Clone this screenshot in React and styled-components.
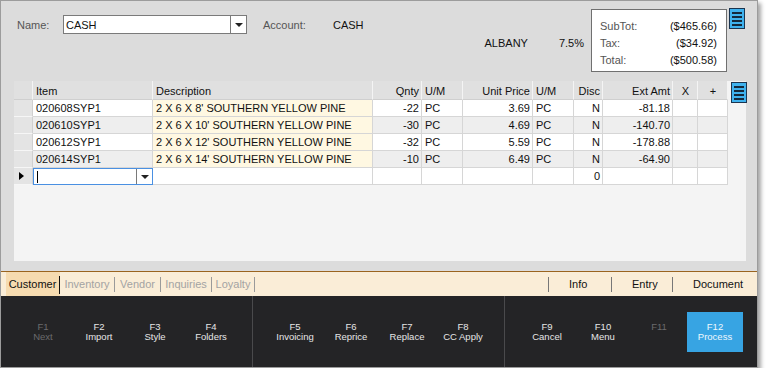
import React from 'react';
import styled, { createGlobalStyle } from 'styled-components';

const GlobalStyle = createGlobalStyle`
  body {
    margin: 0;
    background: #ffffff;
    font-family: 'Liberation Sans', Arial, sans-serif;
  }
  * {
    box-sizing: border-box;
  }
`;

const columns = [
  { key: 'sel', w: 19 },
  { key: 'item', w: 120, label: 'Item', align: 'left' },
  { key: 'desc', w: 220, label: 'Description', align: 'left' },
  { key: 'qty', w: 49, label: 'Qnty', align: 'right' },
  { key: 'um', w: 41, label: 'U/M', align: 'left' },
  { key: 'price', w: 70, label: 'Unit Price', align: 'right' },
  { key: 'um2', w: 41, label: 'U/M', align: 'left' },
  { key: 'disc', w: 29, label: 'Disc', align: 'right' },
  { key: 'ext', w: 70, label: 'Ext Amt', align: 'right' },
  { key: 'x', w: 25, label: 'X', align: 'center' },
  { key: 'plus', w: 30, label: '+', align: 'center' },
];

const template = columns.map((c) => `${c.w}px`).join(' ');

const lines = [
  { item: '020608SYP1', desc: "2 X 6 X 8' SOUTHERN YELLOW PINE", qty: '-22', um: 'PC', price: '3.69', um2: 'PC', disc: 'N', ext: '-81.18' },
  { item: '020610SYP1', desc: "2 X 6 X 10' SOUTHERN YELLOW PINE", qty: '-30', um: 'PC', price: '4.69', um2: 'PC', disc: 'N', ext: '-140.70' },
  { item: '020612SYP1', desc: "2 X 6 X 12' SOUTHERN YELLOW PINE", qty: '-32', um: 'PC', price: '5.59', um2: 'PC', disc: 'N', ext: '-178.88' },
  { item: '020614SYP1', desc: "2 X 6 X 14' SOUTHERN YELLOW PINE", qty: '-10', um: 'PC', price: '6.49', um2: 'PC', disc: 'N', ext: '-64.90' },
];

const tabsLeft = [
  { name: 'Customer', w: 54 },
  { name: 'Inventory', w: 55 },
  { name: 'Vendor', w: 46 },
  { name: 'Inquiries', w: 51 },
  { name: 'Loyalty', w: 43 },
];

const tabsRight = [
  { name: 'Info', w: 63 },
  { name: 'Entry', w: 61 },
  { name: 'Document', w: 85 },
];

const keyGroups = [
  [
    { k: 'F1', label: 'Next', off: true },
    { k: 'F2', label: 'Import' },
    { k: 'F3', label: 'Style' },
    { k: 'F4', label: 'Folders' },
  ],
  [
    { k: 'F5', label: 'Invoicing' },
    { k: 'F6', label: 'Reprice' },
    { k: 'F7', label: 'Replace' },
    { k: 'F8', label: 'CC Apply' },
  ],
  [
    { k: 'F9', label: 'Cancel' },
    { k: 'F10', label: 'Menu' },
    { k: 'F11', label: '', off: true },
    { k: 'F12', label: 'Process', primary: true },
  ],
];

const Window = styled.div`
  width: 758px;
  height: 368px;
  border: 1px solid #9c9c9c;
  background: #dcdcdc;
  box-shadow: 3px 3px 4px rgba(0, 0, 0, 0.35);
  display: flex;
  flex-direction: column;
  font-size: 11px;
  color: #111;
`;

const Header = styled.div`
  height: 80px;
  display: flex;
  align-items: flex-start;
  padding-right: 12px;
`;

const Fields = styled.div`
  flex: 1;
  display: flex;
  flex-direction: column;
`;

const NameRow = styled.div`
  display: flex;
  align-items: center;
  height: 19px;
  margin-top: 14px;
  padding-left: 16px;
`;

const Label = styled.span`
  color: #555;
  width: ${(p) => p.$w}px;
`;

const Value = styled.span`
  color: #111;
`;

const Combo = styled.div`
  display: flex;
  width: ${(p) => p.$w}px;
  height: ${(p) => p.$h}px;
  background: #fff;
  border: 1px solid ${(p) => p.$border};
  margin-right: ${(p) => p.$mr || 0}px;
`;

const ComboText = styled.div`
  flex: 1;
  display: flex;
  align-items: center;
  padding-left: 2px;
`;

const Caret = styled.span`
  width: 1px;
  height: 12px;
  background: #000;
  margin-left: 1px;
`;

const ComboButton = styled.div`
  width: 16px;
  border-left: 1px solid #7a7a7a;
  display: flex;
  align-items: center;
  justify-content: center;

  &::after {
    content: '';
    border-left: 4px solid transparent;
    border-right: 4px solid transparent;
    border-top: 4px solid #222;
  }
`;

const LocationRow = styled.div`
  display: flex;
  justify-content: flex-end;
  gap: 31px;
  padding-right: 7px;
  margin-top: 2px;
  height: 14px;
  align-items: center;
`;

const Totals = styled.div`
  width: 136px;
  height: 63px;
  margin-top: 8px;
  background: #fff;
  border: 1px solid #707070;
  padding: 7px 9px 0 8px;
  display: flex;
  flex-direction: column;
`;

const TotalRow = styled.div`
  display: flex;
  justify-content: space-between;
  height: 17px;
  align-items: center;

  span:first-child {
    color: #555;
  }
`;

const MenuIconBox = styled.div`
  margin: ${(p) => p.$mt}px 0 0 ${(p) => p.$ml}px;
  width: 16px;
  height: 21px;
  flex-shrink: 0;
`;

const MenuIcon = ({ mt, ml }) => (
  <MenuIconBox $mt={mt} $ml={ml}>
    <svg width="16" height="21" viewBox="0 0 16 21">
      <rect x="0.5" y="0.5" width="15" height="20" fill="#3fb2ee" stroke="#1b3550" />
      <rect x="3" y="4" width="10" height="2" fill="#15293c" />
      <rect x="3" y="8" width="10" height="2" fill="#15293c" />
      <rect x="3" y="12" width="10" height="2" fill="#15293c" />
      <rect x="3" y="16" width="10" height="2" fill="#15293c" />
    </svg>
  </MenuIconBox>
);

const GridArea = styled.div`
  height: 180px;
  margin: 0 11px 0 13px;
  background: #f4f4f4;
  display: flex;
  align-items: flex-start;
`;

const Table = styled.div`
  display: flex;
  flex-direction: column;
`;

const Row = styled.div`
  display: grid;
  grid-template-columns: ${template};
  height: ${(p) => (p.$head ? 19 : 17)}px;
  background: ${(p) => (p.$alt ? '#eeeeee' : '#ffffff')};
`;

const HeadCell = styled.div`
  background: #e0e0e0;
  border-right: 1px solid #f4f4f4;
  border-bottom: 1px solid #cfcfcf;
  display: flex;
  align-items: center;
  justify-content: ${(p) => p.$justify};
  padding: 1px 2px 0 3px;
  white-space: nowrap;
`;

const Cell = styled.div`
  border-right: 1px solid #d6d6d6;
  border-bottom: 1px solid #d6d6d6;
  display: flex;
  align-items: center;
  justify-content: ${(p) => p.$justify};
  padding: 0 2px 0 3px;
  white-space: nowrap;
  background: ${(p) => p.$bg || 'transparent'};
`;

const RowHead = styled.div`
  background: #e4e4e4;
  border-right: 1px solid #d0d0d0;
  border-bottom: 1px solid #f6f6f6;
  display: flex;
  align-items: center;
  padding-left: 5px;

  &::after {
    content: ${(p) => (p.$current ? "''" : 'none')};
    border-top: 4px solid transparent;
    border-bottom: 4px solid transparent;
    border-left: 5px solid #000;
  }
`;

const justifyOf = (align) =>
  align === 'right' ? 'flex-end' : align === 'center' ? 'center' : 'flex-start';

const TabBar = styled.div`
  margin-top: 10px;
  height: 25px;
  border-top: 1px solid #9a641f;
  background: #faedd7;
  display: flex;
  align-items: center;
  padding-left: 5px;
`;

const Tab = styled.div`
  width: ${(p) => p.$w}px;
  height: 100%;
  display: flex;
  align-items: center;
  justify-content: center;
  padding-right: 1px;
  background: ${(p) => (p.$active ? '#f6dbb0' : 'transparent')};
  color: ${(p) => (p.$active ? '#111' : '#a3a3a3')};
  position: relative;

  &::after {
    content: '';
    position: absolute;
    right: 0;
    top: ${(p) => (p.$active ? 4 : 5)}px;
    bottom: ${(p) => (p.$active ? 2 : 4)}px;
    width: 1px;
    background: ${(p) => (p.$active ? '#111' : '#9a9a9a')};
  }
`;

const Spacer = styled.div`
  flex: 1;
`;

const SideTab = styled.div`
  height: 100%;
  display: flex;
  align-items: center;
  width: ${(p) => p.$w}px;
  padding-left: 21px;
  color: #111;
  position: relative;

  &::before {
    content: '';
    position: absolute;
    left: 0;
    top: 5px;
    bottom: 4px;
    width: 1px;
    background: #777;
  }
`;

const KeyBar = styled.div`
  flex: 1;
  background: #242426;
  display: flex;
`;

const KeyGroup = styled.div`
  width: 253px;
  display: flex;
  align-items: center;
  padding-left: 14px;
  border-right: ${(p) => (p.$last ? 'none' : '1px solid #4a4a4c')};
`;

const KeyButton = styled.div`
  width: 56px;
  height: 40px;
  display: flex;
  flex-direction: column;
  align-items: center;
  justify-content: center;
  padding-top: ${(p) => (p.$primary ? 1 : 0)}px;
  background: ${(p) => (p.$primary ? '#37a4e3' : 'transparent')};
  color: ${(p) => (p.$off ? '#6b6b6d' : p.$primary ? '#eef7fd' : '#e6e6e6')};
  font-size: 9.5px;
  line-height: 10px;
  text-align: center;
`;

const KeyLabel = styled.span`
  min-height: 10px;
`;

export default function App() {
  return (
    <>
      <GlobalStyle />
      <Window>
        <Header>
          <Fields>
            <NameRow>
              <Label $w={46}>Name:</Label>
              <Combo $w={184} $h={19} $border="#7a7a7a" $mr={16}>
                <ComboText>CASH</ComboText>
                <ComboButton />
              </Combo>
              <Label $w={70}>Account:</Label>
              <Value>CASH</Value>
            </NameRow>
            <LocationRow>
              <Value>ALBANY</Value>
              <Value>7.5%</Value>
            </LocationRow>
          </Fields>
          <Totals>
            <TotalRow>
              <span>SubTot:</span>
              <span>($465.66)</span>
            </TotalRow>
            <TotalRow>
              <span>Tax:</span>
              <span>($34.92)</span>
            </TotalRow>
            <TotalRow>
              <span>Total:</span>
              <span>($500.58)</span>
            </TotalRow>
          </Totals>
          <MenuIcon mt={7} ml={2} />
        </Header>

        <GridArea>
          <Table>
            <Row $head>
              {columns.map((c) => (
                <HeadCell key={c.key} $justify={justifyOf(c.align)}>
                  {c.label}
                </HeadCell>
              ))}
            </Row>
            {lines.map((line, i) => (
              <Row key={line.item} $alt={i % 2 === 1}>
                <RowHead />
                {columns.slice(1).map((c) => (
                  <Cell
                    key={c.key}
                    $justify={justifyOf(c.align)}
                    $bg={c.key === 'desc' ? '#fff8e2' : undefined}
                  >
                    {line[c.key]}
                  </Cell>
                ))}
              </Row>
            ))}
            <Row>
              <RowHead $current />
              <Combo $w={120} $h={17} $border="#4a90e2">
                <ComboText>
                  <Caret />
                </ComboText>
                <ComboButton />
              </Combo>
              {columns.slice(2).map((c) => (
                <Cell key={c.key} $justify={justifyOf(c.align)}>
                  {c.key === 'disc' ? '0' : ''}
                </Cell>
              ))}
            </Row>
          </Table>
          <MenuIcon mt={1} ml={3} />
        </GridArea>

        <TabBar>
          {tabsLeft.map((t, i) => (
            <Tab key={t.name} $w={t.w} $active={i === 0}>
              {t.name}
            </Tab>
          ))}
          <Spacer />
          {tabsRight.map((t) => (
            <SideTab key={t.name} $w={t.w}>
              {t.name}
            </SideTab>
          ))}
        </TabBar>

        <KeyBar>
          {keyGroups.map((group, gi) => (
            <KeyGroup key={gi} $last={gi === keyGroups.length - 1}>
              {group.map((b) => (
                <KeyButton key={b.k} $off={b.off} $primary={b.primary}>
                  <KeyLabel>{b.k}</KeyLabel>
                  <KeyLabel>{b.label}</KeyLabel>
                </KeyButton>
              ))}
            </KeyGroup>
          ))}
        </KeyBar>
      </Window>
    </>
  );
}
